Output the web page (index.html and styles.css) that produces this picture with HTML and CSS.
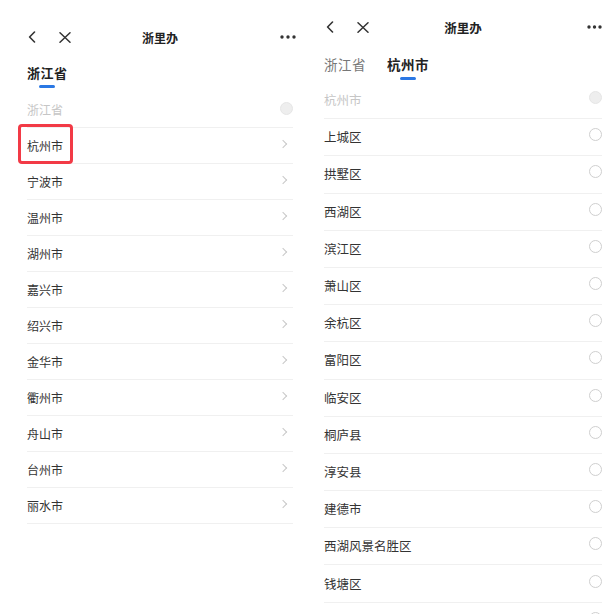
FILE: index.html
```html
<!DOCTYPE html>
<html lang="zh-CN">
<head>
    <meta charset="UTF-8">
    <meta name="viewport" content="width=device-width, initial-scale=1.0">
    <title>浙里办</title>
    <link rel="stylesheet" href="styles.css">
</head>
<body>

    <!-- step 1: province -->
    <div class="phone phone-left">
        <div class="nav-bar">
            <div class="nav-left">
                <svg class="icon-back" width="8" height="12" viewBox="0 0 8 12"><path d="M6.5 1 L1.6 6 L6.5 11" fill="none" stroke="#333" stroke-width="1.6" stroke-linecap="round" stroke-linejoin="round"/></svg>
                <svg class="icon-close" width="12" height="11" viewBox="0 0 12 11"><path d="M1 0.8 L11 10.2 M11 0.8 L1 10.2" fill="none" stroke="#333" stroke-width="1.5" stroke-linecap="round"/></svg>
            </div>
            <div class="nav-title">浙里办</div>
            <div class="nav-right">
                <svg width="16" height="4" viewBox="0 0 16 4"><circle cx="2" cy="2" r="1.7" fill="#333"/><circle cx="8" cy="2" r="1.7" fill="#333"/><circle cx="14" cy="2" r="1.7" fill="#333"/></svg>
            </div>
        </div>

        <div class="tabs">
            <div class="tab active">浙江省<span class="tab-line"></span></div>
        </div>

        <div class="area-list">
            <div class="area-row disabled"><span>浙江省</span><span class="radio filled"></span></div>
            <div class="area-row"><span class="highlight">杭州市</span><span class="arrow"></span></div>
            <div class="area-row"><span>宁波市</span><span class="arrow"></span></div>
            <div class="area-row"><span>温州市</span><span class="arrow"></span></div>
            <div class="area-row"><span>湖州市</span><span class="arrow"></span></div>
            <div class="area-row"><span>嘉兴市</span><span class="arrow"></span></div>
            <div class="area-row"><span>绍兴市</span><span class="arrow"></span></div>
            <div class="area-row"><span>金华市</span><span class="arrow"></span></div>
            <div class="area-row"><span>衢州市</span><span class="arrow"></span></div>
            <div class="area-row"><span>舟山市</span><span class="arrow"></span></div>
            <div class="area-row"><span>台州市</span><span class="arrow"></span></div>
            <div class="area-row"><span>丽水市</span><span class="arrow"></span></div>
        </div>
    </div>

    <!-- step 2: city -->
    <div class="phone phone-right">
        <div class="nav-bar">
            <div class="nav-left">
                <svg class="icon-back" width="8" height="12" viewBox="0 0 8 12"><path d="M6.5 1 L1.6 6 L6.5 11" fill="none" stroke="#333" stroke-width="1.6" stroke-linecap="round" stroke-linejoin="round"/></svg>
                <svg class="icon-close" width="12" height="11" viewBox="0 0 12 11"><path d="M1 0.8 L11 10.2 M11 0.8 L1 10.2" fill="none" stroke="#333" stroke-width="1.5" stroke-linecap="round"/></svg>
            </div>
            <div class="nav-title">浙里办</div>
            <div class="nav-right">
                <svg width="15" height="4" viewBox="0 0 15 4"><circle cx="2" cy="2" r="1.7" fill="#333"/><circle cx="7.5" cy="2" r="1.7" fill="#333"/><circle cx="13" cy="2" r="1.7" fill="#333"/></svg>
            </div>
        </div>

        <div class="tabs">
            <div class="tab">浙江省</div>
            <div class="tab active">杭州市<span class="tab-line"></span></div>
        </div>

        <div class="area-list">
            <div class="area-row disabled"><span>杭州市</span><span class="radio filled"></span></div>
            <div class="area-row"><span>上城区</span><span class="radio"></span></div>
            <div class="area-row"><span>拱墅区</span><span class="radio"></span></div>
            <div class="area-row"><span>西湖区</span><span class="radio"></span></div>
            <div class="area-row"><span>滨江区</span><span class="radio"></span></div>
            <div class="area-row"><span>萧山区</span><span class="radio"></span></div>
            <div class="area-row"><span>余杭区</span><span class="radio"></span></div>
            <div class="area-row"><span>富阳区</span><span class="radio"></span></div>
            <div class="area-row"><span>临安区</span><span class="radio"></span></div>
            <div class="area-row"><span>桐庐县</span><span class="radio"></span></div>
            <div class="area-row"><span>淳安县</span><span class="radio"></span></div>
            <div class="area-row"><span>建德市</span><span class="radio"></span></div>
            <div class="area-row"><span>西湖风景名胜区</span><span class="radio"></span></div>
            <div class="area-row"><span>钱塘区</span><span class="radio"></span></div>
            <!-- next row is cut off by the screenshot, only its radio peeks in -->
            <div class="area-row"><span></span><span class="radio"></span></div>
        </div>
    </div>

</body>
</html>
```

FILE: styles.css
```css
* {
    box-sizing: border-box;
}

body {
    margin: 0;
    height: 614px;
    overflow: hidden;
    background: #fff;
    display: flex;
    align-items: flex-start;
    font-family: "Noto Sans CJK SC", "Noto Sans", sans-serif;
    color: #333;
}

.phone-left {
    width: 300px;
    flex-shrink: 0;
    padding: 15px 7px 0 27px;
}

.phone-right {
    flex: 1;
    padding: 5px 6px 0 24px;
}

/* nav bar */

.nav-bar {
    height: 44px;
    display: grid;
    grid-template-columns: 1fr auto 1fr;
    align-items: center;
}

.nav-left {
    display: flex;
    align-items: center;
    gap: 23px;
    padding-left: 1px;
}

.phone-right .nav-left {
    padding-left: 2px;
}

.icon-back,
.icon-close {
    display: block;
}

.nav-title {
    font-size: 12px;
    font-weight: bold;
    color: #222;
}

.phone-right .nav-title {
    font-size: 12.5px;
}

.nav-right {
    display: flex;
    justify-content: flex-end;
    margin-right: -3px;
}

.phone-right .nav-right {
    margin-right: 0;
}

.nav-right svg {
    display: block;
}

/* tabs */

.tabs {
    height: 33px;
    display: flex;
    gap: 20px;
    padding-top: 4px;
}

.phone-right .tabs {
    padding-top: 5px;
    gap: 21px;
}

.tab {
    position: relative;
    font-size: 13px;
    line-height: 20px;
    color: #777;
    letter-spacing: 0.5px;
}

.phone-right .tab {
    font-size: 13.5px;
}

.tab.active {
    font-weight: bold;
    color: #222;
}

.tab-line {
    position: absolute;
    left: 50%;
    top: 22px;
    width: 16px;
    height: 2.5px;
    margin-left: -8px;
    border-radius: 2px;
    background: #2b78e4;
}

.phone-right .tab-line {
    top: 23px;
}

/* list */

.area-row {
    height: 36px;
    display: flex;
    align-items: center;
    justify-content: space-between;
    border-bottom: 1px solid #f0f0f0;
    font-size: 12px;
    color: #333;
}

.phone-right .area-row {
    height: 37.2px;
    font-size: 12.5px;
}

.area-row.disabled {
    color: #c6c6c6;
}

.area-row span:first-child {
    line-height: 20px;
}

.arrow {
    width: 6px;
    height: 6px;
    margin: 0 7px 4px 0;
    border-top: 1px solid #c8c8c8;
    border-right: 1px solid #c8c8c8;
    transform: rotate(45deg);
}

.radio {
    width: 13px;
    height: 13px;
    margin: 0 0 5px 0;
    border: 1px solid #cfcfcf;
    border-radius: 50%;
}

.phone-left .radio {
    margin-bottom: 3px;
}

.radio.filled {
    background: #eeeeee;
    border-color: #e6e6e6;
}

.highlight {
    position: relative;
}

.highlight::after {
    content: '';
    position: absolute;
    top: -12px;
    bottom: -8px;
    left: -9px;
    right: -10px;
    border: 3px solid #f23a46;
    border-radius: 4px;
}
```
